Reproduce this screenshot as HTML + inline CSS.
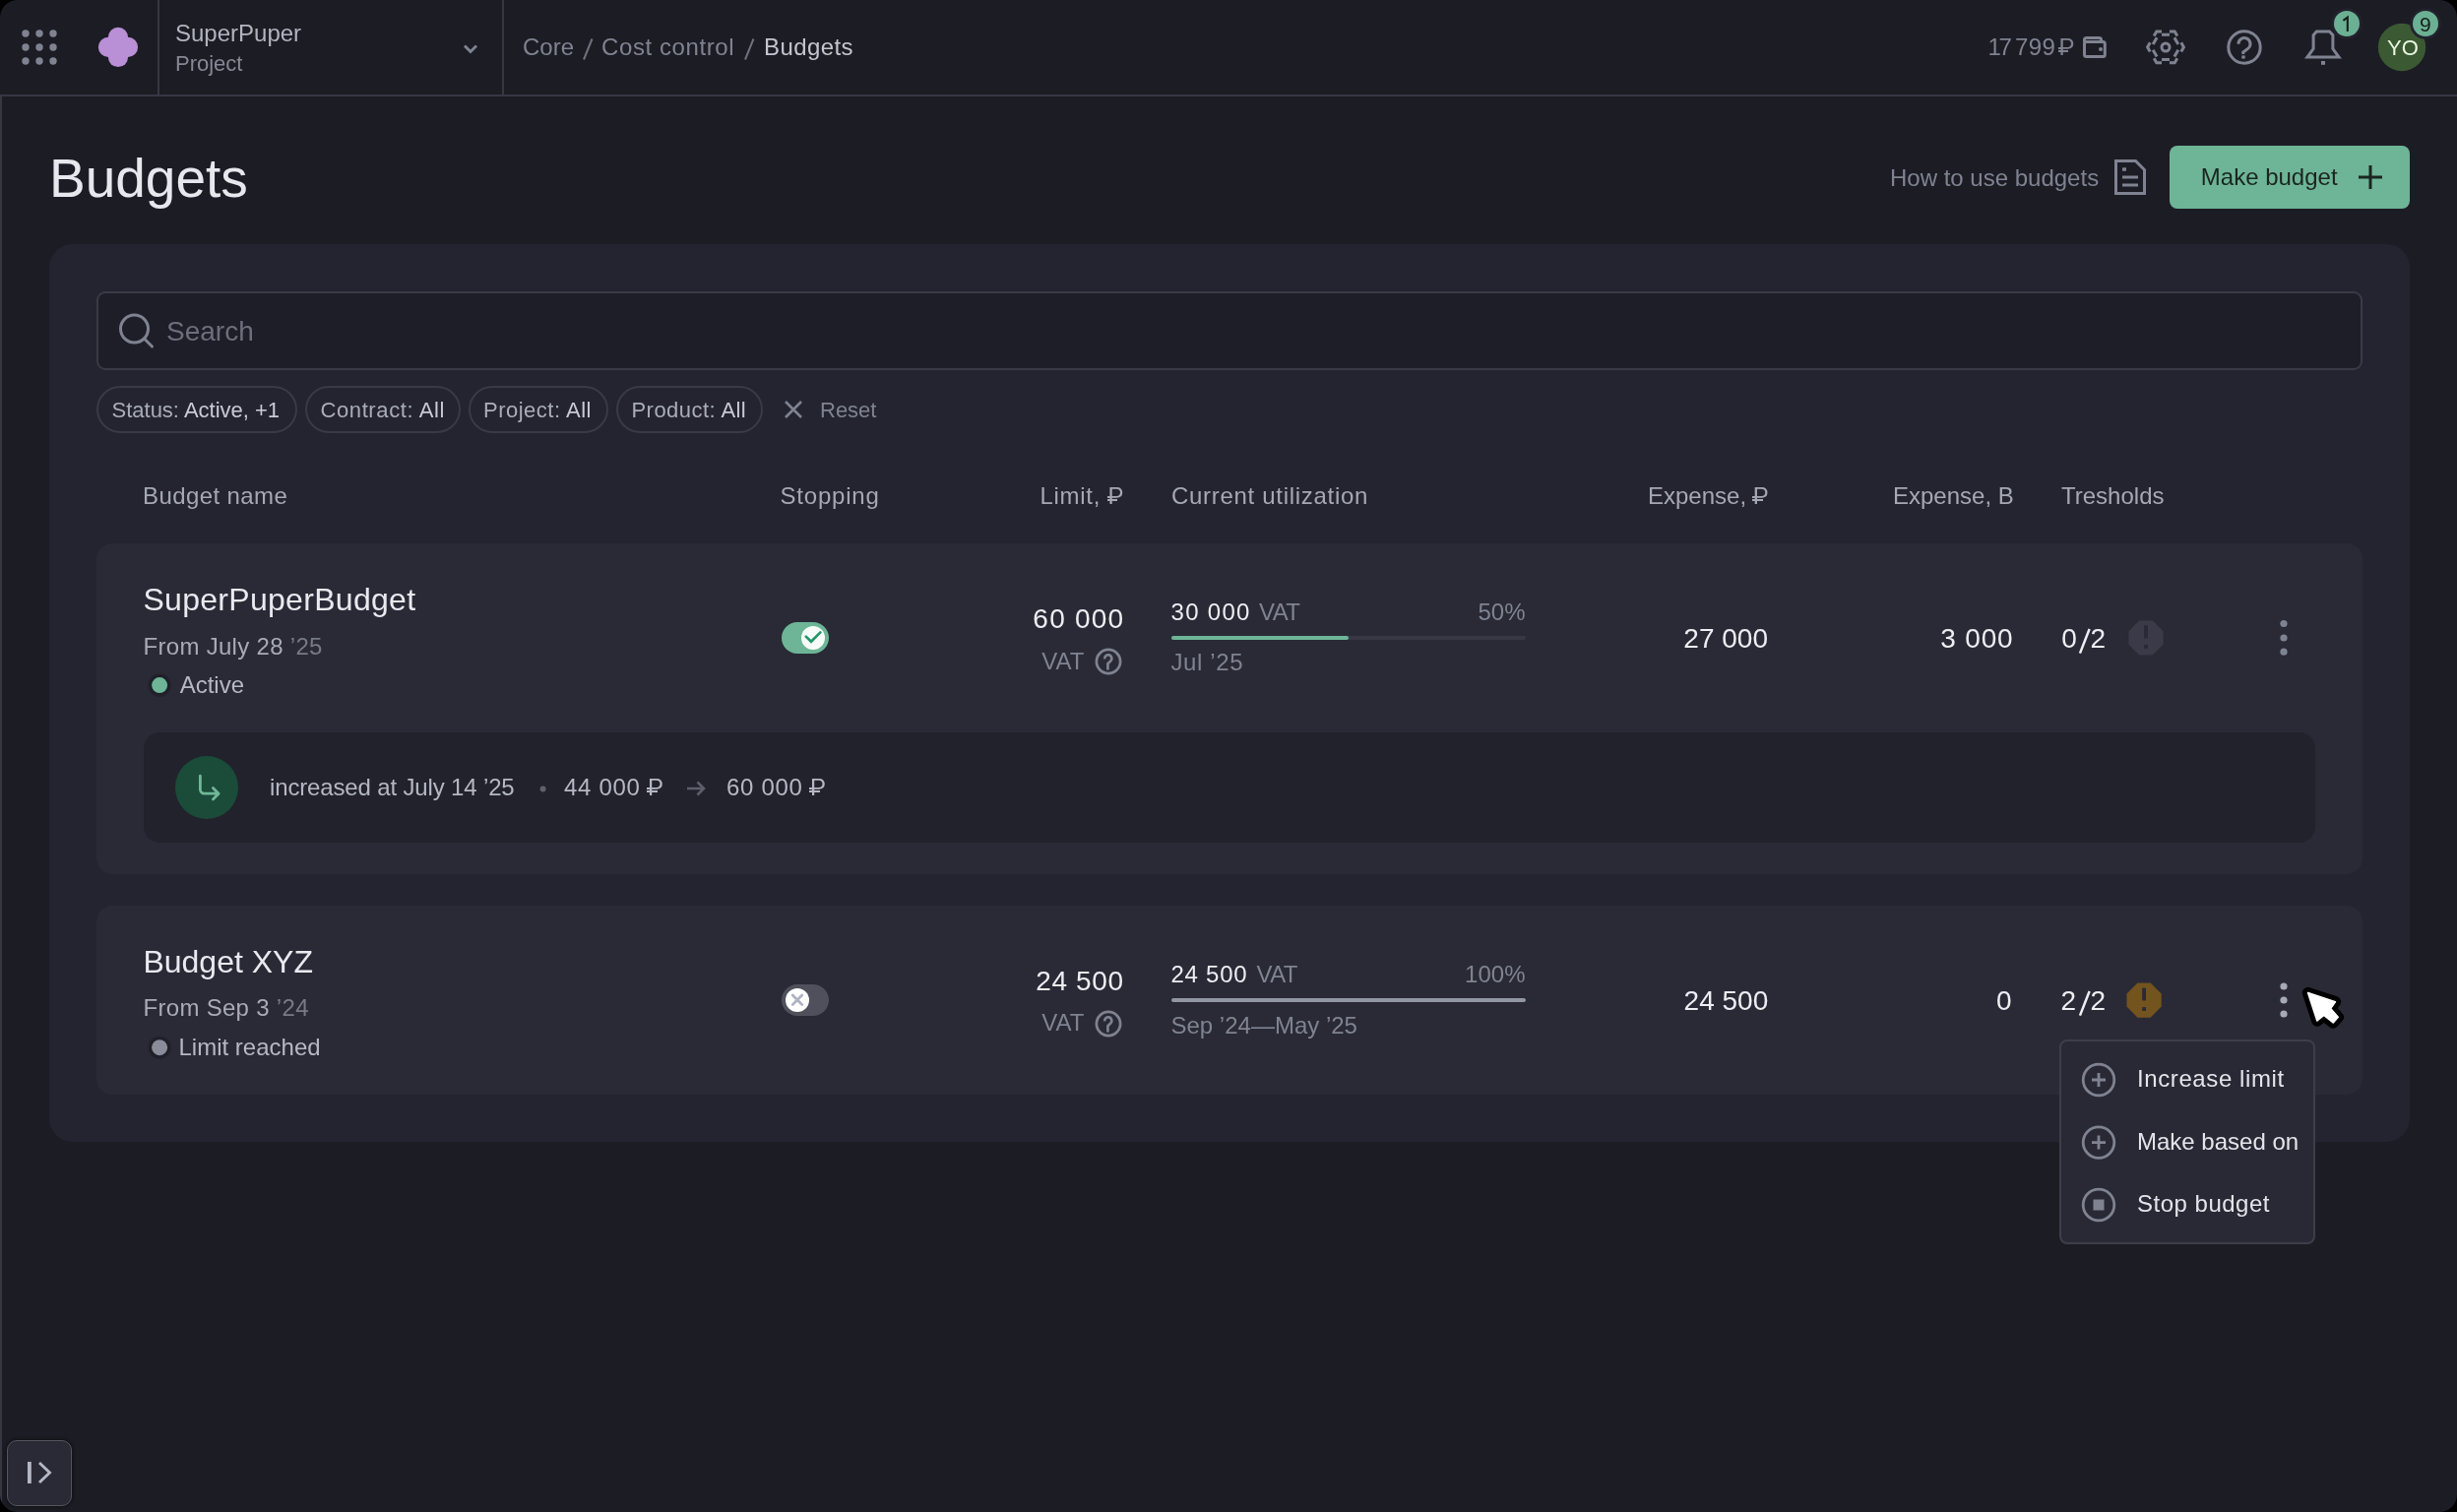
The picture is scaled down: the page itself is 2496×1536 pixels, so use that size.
<!DOCTYPE html>
<html><head><meta charset="utf-8">
<style>
html,body{margin:0;padding:0;background:#000;width:2496px;height:1536px;overflow:hidden}
*{box-sizing:border-box}
body{font-family:"Liberation Sans",sans-serif}
.win{will-change:transform;position:absolute;left:0;top:0;width:2496px;height:1536px;background:#1c1c24;border-radius:18px;overflow:hidden}
.a{position:absolute}
.t{position:absolute;line-height:1;white-space:nowrap}
.rub{position:relative;display:inline-block}
.rub::after{content:"";position:absolute;left:-0.025em;width:0.44em;height:0.08em;background:currentColor;top:0.625em}
.rub::before{content:"";position:absolute;left:-0.025em;width:0.19em;height:0.08em;background:currentColor;top:0.495em}
svg.full{position:absolute;left:0;top:0;width:2496px;height:1536px;overflow:visible}
</style></head><body>
<div class="win">
  <!-- ===== header ===== -->
  <div class="a" style="left:0;top:96px;width:2496px;height:2px;background:#363743"></div>
  <div class="a" style="left:160px;top:0;width:2px;height:96px;background:#363743"></div>
  <div class="a" style="left:510px;top:0;width:2px;height:96px;background:#363743"></div>
  <div class="a" style="left:0;top:96px;width:2px;height:1440px;background:#363743"></div>

  <div class="t" style="left:178px;top:21.7px;font-size:24px;color:#b1b4bf">SuperPuper</div>
  <div class="t" style="left:178px;top:53.7px;font-size:22px;color:#858894">Project</div>

  <div class="t" style="left:531px;top:35.7px;font-size:24px;color:#7f8391">Core</div>
  <div class="t" style="left:611px;top:35.7px;font-size:24px;color:#7f8391;letter-spacing:0.6px">Cost control</div>
  <div class="t" style="left:776px;top:35.7px;font-size:24px;color:#c3c6d0;letter-spacing:0.4px">Budgets</div>

  <div class="t" style="left:2019.6px;top:35.9px;font-size:24px;color:#7f8391;letter-spacing:-2.4px">17</div>
  <div class="t" style="left:2047px;top:35.9px;font-size:24px;color:#7f8391;letter-spacing:0.4px">799</div>
  <div class="t" style="left:2091.5px;top:35.9px;font-size:24px;color:#7f8391"><span class="rub">P</span></div>


  <!-- ===== title row ===== -->
  <div class="t" style="left:50px;top:153.6px;font-size:55px;color:#e6e8ee">Budgets</div>
  <div class="t" style="left:1920px;top:168.8px;font-size:24px;color:#7f8391">How to use budgets</div>
  <div class="a" style="left:2204px;top:148px;width:244px;height:64px;border-radius:8px;background:#6db596"></div>
  <div class="t" style="left:2235.8px;top:167.9px;font-size:24px;color:#1b2520">Make budget</div>

  <!-- ===== panel ===== -->
  <div class="a" style="left:50px;top:248px;width:2398px;height:912px;border-radius:24px;background:#242430"></div>
  <div class="a" style="left:98px;top:296px;width:2302px;height:80px;border-radius:9px;background:#1e1e28;border:2px solid #3a3a47"></div>
  <div class="t" style="left:169px;top:323px;font-size:28px;color:#6c6e7a">Search</div>

  <div class="a" style="left:98px;top:392px;width:204px;height:48px;border-radius:24px;border:2px solid #393a46"></div>
  <div class="a" style="left:310px;top:392px;width:158px;height:48px;border-radius:24px;border:2px solid #393a46"></div>
  <div class="a" style="left:476px;top:392px;width:142px;height:48px;border-radius:24px;border:2px solid #393a46"></div>
  <div class="a" style="left:626px;top:392px;width:148.5px;height:48px;border-radius:24px;border:2px solid #393a46"></div>
  <div class="t" style="left:113.5px;top:405.8px;font-size:22px;color:#a9adb8">Status: <span style="color:#c8cbd7">Active, +1</span></div>
  <div class="t" style="left:325.5px;top:405.8px;font-size:22px;color:#a9adb8;letter-spacing:0.6px">Contract: <span style="color:#c8cbd7">All</span></div>
  <div class="t" style="left:491px;top:405.8px;font-size:22px;color:#a9adb8;letter-spacing:0.5px">Project: <span style="color:#c8cbd7">All</span></div>
  <div class="t" style="left:641.5px;top:405.8px;font-size:22px;color:#a9adb8;letter-spacing:0.45px">Product: <span style="color:#c8cbd7">All</span></div>
  <div class="t" style="left:833px;top:405.8px;font-size:22px;color:#7f8391">Reset</div>

  <!-- table header -->
  <div class="t" style="left:145px;top:492px;font-size:24px;color:#a5a8b4;letter-spacing:0.4px">Budget name</div>
  <div class="t" style="left:792.5px;top:492px;font-size:24px;color:#a5a8b4;letter-spacing:0.8px">Stopping</div>
  <div class="t" style="left:1056.5px;top:492px;font-size:24px;color:#a5a8b4;letter-spacing:0.7px">Limit, <span class="rub">P</span></div>
  <div class="t" style="left:1190px;top:492px;font-size:24px;color:#a5a8b4;letter-spacing:0.7px">Current utilization</div>
  <div class="t" style="left:1674px;top:492px;font-size:24px;color:#a5a8b4">Expense, <span class="rub">P</span></div>
  <div class="t" style="left:1923px;top:492px;font-size:24px;color:#a5a8b4">Expense, B</div>
  <div class="t" style="left:2094px;top:492px;font-size:24px;color:#a5a8b4">Tresholds</div>

  <!-- ===== row 1 ===== -->
  <div class="a" style="left:98px;top:551.5px;width:2302px;height:336.5px;border-radius:16px;background:#2a2a36"></div>
  <div class="t" style="left:145.4px;top:593.4px;font-size:32px;color:#e9eaf0;letter-spacing:0.3px">SuperPuperBudget</div>
  <div class="t" style="left:145.5px;top:644.5px;font-size:24px;color:#a8abb7;letter-spacing:0.3px">From July 28 <span style="color:#777a86">’25</span></div>
  <div class="t" style="left:182.7px;top:684.3px;font-size:24px;color:#b5b8c2">Active</div>
  <div class="t" style="right:1353.8px;top:615.2px;font-size:28px;color:#eceef3;letter-spacing:1.2px">60 000</div>
  <div class="t" style="left:1058.3px;top:659.7px;font-size:24px;color:#7f8391">VAT</div>
  <div class="t" style="left:1189.5px;top:609.7px;font-size:24px;color:#eceef3;letter-spacing:1.3px">30 000</div>
  <div class="t" style="left:1279px;top:609.7px;font-size:24px;color:#7f8391;letter-spacing:-0.6px">VAT</div>
  <div class="t" style="right:946.5px;top:609.7px;font-size:24px;color:#7f8391">50%</div>
  <div class="t" style="left:1189.5px;top:661px;font-size:24px;color:#7f8391;letter-spacing:0.6px">Jul ’25</div>
  <div class="t" style="right:700px;top:634.8px;font-size:28px;color:#eceef3">27 000</div>
  <div class="t" style="right:450.6px;top:634.8px;font-size:28px;color:#eceef3;letter-spacing:0.8px">3 000</div>
  <div class="t" style="left:2094.2px;top:634.9px;font-size:28px;color:#eceef3">0</div>
  <div class="t" style="left:2123.6px;top:634.9px;font-size:28px;color:#eceef3">2</div>

  <div class="a" style="left:146px;top:744px;width:2206px;height:112px;border-radius:16px;background:#22222c"></div>
  <div class="t" style="left:274px;top:788.1px;font-size:24px;color:#b5b8c2;letter-spacing:-0.15px">increased at July 14 ’25</div>
  <div class="t" style="left:573px;top:788.1px;font-size:24px;color:#b5b8c2;letter-spacing:0.7px">44 000 <span class="rub">P</span></div>
  <div class="t" style="left:738px;top:788.1px;font-size:24px;color:#b5b8c2;letter-spacing:0.7px">60 000 <span class="rub">P</span></div>

  <!-- ===== row 2 ===== -->
  <div class="a" style="left:98px;top:920px;width:2302px;height:192px;border-radius:16px;background:#2a2a36"></div>
  <div class="t" style="left:145.4px;top:960.9px;font-size:32px;color:#e9eaf0">Budget XYZ</div>
  <div class="t" style="left:145.5px;top:1012.2px;font-size:24px;color:#a8abb7;letter-spacing:0.3px">From Sep 3 <span style="color:#777a86">’24</span></div>
  <div class="t" style="left:181.5px;top:1051.7px;font-size:24px;color:#b5b8c2">Limit reached</div>
  <div class="t" style="right:1354.4px;top:983.4px;font-size:28px;color:#eceef3;letter-spacing:0.6px">24 500</div>
  <div class="t" style="left:1058.3px;top:1027.1px;font-size:24px;color:#7f8391">VAT</div>
  <div class="t" style="left:1189.5px;top:977.5px;font-size:24px;color:#eceef3;letter-spacing:0.75px">24 500</div>
  <div class="t" style="left:1276.5px;top:977.5px;font-size:24px;color:#7f8391;letter-spacing:-0.6px">VAT</div>
  <div class="t" style="right:946.5px;top:977.5px;font-size:24px;color:#7f8391">100%</div>
  <div class="t" style="left:1189.5px;top:1030.1px;font-size:24px;color:#7f8391">Sep ’24—May ’25</div>
  <div class="t" style="right:699.8px;top:1002.8px;font-size:28px;color:#eceef3">24 500</div>
  <div class="t" style="right:452.4px;top:1002.8px;font-size:28px;color:#eceef3">0</div>
  <div class="t" style="left:2093.6px;top:1003px;font-size:28px;color:#eceef3">2</div>
  <div class="t" style="left:2123.6px;top:1003px;font-size:28px;color:#eceef3">2</div>

  <!-- ===== menu ===== -->
  <div class="a" style="left:2092px;top:1056px;width:260px;height:208px;border-radius:8px;background:#292935;border:2px solid #3d3e4a"></div>
  <div class="t" style="left:2171px;top:1084.3px;font-size:24px;color:#e3e5ea;letter-spacing:0.6px">Increase limit</div>
  <div class="t" style="left:2171px;top:1147.7px;font-size:24px;color:#e3e5ea">Make based on</div>
  <div class="t" style="left:2171px;top:1211.3px;font-size:24px;color:#e3e5ea;letter-spacing:0.5px">Stop budget</div>

  <!-- bottom-left button -->
  <div class="a" style="left:7px;top:1462.5px;width:66px;height:67px;border-radius:10px;background:#2a2a36;border:1.6px solid #55555e;box-shadow:0 0 3px 1px rgba(10,10,14,0.6)"></div>

  <svg class="full" viewBox="0 0 2496 1536">
    <!-- doc icon -->
    <g fill="none" stroke="#7f8391" stroke-width="3">
      <path d="M2149.5 163.5H2169.5L2178.5 172.5V196.5H2149.5Z"/>
      <path d="M2156 180H2172M2156 188H2172"/>
    </g>
    <rect x="2156" y="170.3" width="4" height="3.4" fill="#7f8391"/>
    <!-- plus in button -->
    <path d="M2408 168V192M2396 180H2420" stroke="#1b2520" stroke-width="3"/>
    <!-- search icon -->
    <g fill="none" stroke="#7f8391" stroke-width="3">
      <circle cx="136.5" cy="334" r="14"/>
      <path d="M146.5 344L154.5 352" stroke-linecap="round"/>
    </g>
    <!-- reset x -->
    <path d="M798 408L814 424M814 408L798 424" stroke="#7f8391" stroke-width="2.6"/>

    <!-- row1 icons -->
    <circle cx="162.1" cy="696.1" r="11.8" fill="#23232d"/><circle cx="162.1" cy="696.1" r="10.3" fill="#1f1f29"/>
    <circle cx="162.1" cy="696.1" r="8" fill="#6db596"/>
    <rect x="794" y="632" width="48" height="32" rx="16" fill="#6db596"/>
    <circle cx="826" cy="648" r="12" fill="#f8fcf9"/>
    <path d="M818.8 646.6L824 651.8L833.4 642.4" fill="none" stroke="#24966a" stroke-width="2.7" stroke-linecap="round"/>
    <g fill="none" stroke="#7f8391" stroke-width="2.7">
      <circle cx="1126" cy="672" r="12.1"/>
      <path d="M1122.2 669.4A3.6 3.6 0 1 1 1128.5 671.2L1125.4 674.3V680.6"/>
    </g>
    <rect x="1190" y="646" width="360" height="4" rx="2" fill="#383845"/>
    <rect x="1190" y="646" width="180" height="4" rx="2" fill="#6db596"/>
    <polygon points="2173.3,630.4 2186.7,630.4 2197.6,641.2 2197.6,654.8 2186.7,665.6 2173.3,665.6 2162.4,654.8 2162.4,641.2" fill="#3a3a48"/>
    <rect x="2178.1" y="635.3" width="3.8" height="13.1" fill="#2a2a36"/>
    <rect x="2178.1" y="654.9" width="3.8" height="4" fill="#2a2a36"/>
    <g fill="#7f8391"><circle cx="2320" cy="633.5" r="3.6"/><circle cx="2320" cy="648" r="3.6"/><circle cx="2320" cy="662.2" r="3.6"/></g>

    <path d="M2122.6 639L2113 663.6M2122.6 1007L2113 1031.6" stroke="#eceef3" stroke-width="2.5"/>
    <!-- history -->
    <circle cx="210" cy="800" r="32" fill="#1b4b39"/>
    <path d="M203.4 788.2V802a4.2 4.2 0 0 0 4.2 4.2H222M216.4 800.6L222.1 806.3L216.4 812" fill="none" stroke="#70b898" stroke-width="2.8" stroke-linecap="round" stroke-linejoin="round"/>
    <circle cx="551.6" cy="801.5" r="3" fill="#5e606c"/>
    <path d="M698 801H715M708.5 794.5L715 801L708.5 807.5" fill="none" stroke="#5c5e6a" stroke-width="2.6"/>

    <!-- row2 icons -->
    <circle cx="162.1" cy="1064.2" r="11.8" fill="#23232d"/><circle cx="162.1" cy="1064.2" r="10.3" fill="#1f1f29"/>
    <circle cx="162.1" cy="1064.2" r="8" fill="#8a8d99"/>
    <rect x="794" y="1000" width="48" height="32" rx="16" fill="#50505c"/>
    <circle cx="810" cy="1016" r="12" fill="#ffffff"/>
    <path d="M805.2 1011L814.8 1020.6M814.8 1011L805.2 1020.6" stroke="#adb1c2" stroke-width="2.7" stroke-linecap="round"/>
    <g fill="none" stroke="#7f8391" stroke-width="2.7">
      <circle cx="1126" cy="1040" r="12.1"/>
      <path d="M1122.2 1037.4A3.6 3.6 0 1 1 1128.5 1039.2L1125.4 1042.3V1048.6"/>
    </g>
    <rect x="1190" y="1014" width="360" height="4" rx="2" fill="#9396a3"/>
    <polygon points="2171.5,998.4 2184.6,998.4 2195.7,1009.5 2195.7,1022.6 2184.6,1033.7 2171.5,1033.7 2160.5,1022.6 2160.5,1009.5" fill="#73531e"/>
    <rect x="2176.2" y="1003.6" width="3.8" height="12.8" fill="#2a2a36"/>
    <rect x="2176.2" y="1023.1" width="3.8" height="3.8" fill="#2a2a36"/>
    <g fill="#a7aab5"><circle cx="2320" cy="1002" r="3.6"/><circle cx="2320" cy="1016" r="3.6"/><circle cx="2320" cy="1030" r="3.6"/></g>

    <!-- menu icons -->
    <g fill="none" stroke="#7f8391" stroke-width="2.8">
      <circle cx="2132" cy="1097" r="15.8"/><path d="M2132 1090V1104M2125 1097H2139"/>
      <circle cx="2132" cy="1160.6" r="15.8"/><path d="M2132 1153.6V1167.6M2125 1160.6H2139"/>
      <circle cx="2132" cy="1224" r="15.8"/>
    </g>
    <rect x="2126.5" y="1218.5" width="11" height="11" fill="#7f8391"/>

    <!-- cursor -->
    <path d="M2344.6 1008.6L2372.4 1017.8L2367.6 1024.6L2375.2 1033.2L2370.2 1038.9L2360.8 1031.4L2353.9 1037Z" fill="#000" stroke="#000" stroke-width="11.5" stroke-linejoin="round"/>
    <path d="M2344.6 1008.6L2372.4 1017.8L2367.6 1024.6L2375.2 1033.2L2370.2 1038.9L2360.8 1031.4L2353.9 1037Z" fill="#fff" stroke="#fff" stroke-width="1.6" stroke-linejoin="round"/>

    <!-- bottom-left icon -->
    <rect x="28" y="1485" width="3.8" height="22" fill="#b4b7c6"/>
    <path d="M40 1486L50.5 1496L40 1506" fill="none" stroke="#b4b7c6" stroke-width="2.9"/>
  </svg>

  <svg class="full" viewBox="0 0 2496 1536">
    <!-- dots grid -->
    <g fill="#7f8391">
      <circle cx="26" cy="34" r="3.7"/><circle cx="40" cy="34" r="3.7"/><circle cx="54" cy="34" r="3.7"/>
      <circle cx="26" cy="48" r="3.7"/><circle cx="40" cy="48" r="3.7"/><circle cx="54" cy="48" r="3.7"/>
      <circle cx="26" cy="62" r="3.7"/><circle cx="40" cy="62" r="3.7"/><circle cx="54" cy="62" r="3.7"/>
    </g>
    <!-- flower logo -->
    <g fill="#b98fd5">
      <circle cx="120" cy="37.8" r="10.1"/><circle cx="120" cy="58" r="10.1"/>
      <circle cx="110" cy="47.9" r="10.1"/><circle cx="130" cy="47.9" r="10.1"/>
      <rect x="110" y="38" width="20" height="20"/>
    </g>
    <path d="M601.5 39.5L593 60.5M765.5 39.5L757 60.5" stroke="#6e717d" stroke-width="2"/>
    <!-- chevron -->
    <path d="M472 46.5L478 52.5L484 46.5" fill="none" stroke="#7f8391" stroke-width="3"/>
    <!-- wallet -->
    <g fill="none" stroke="#7f8391" stroke-width="3">
      <rect x="2117.5" y="42.5" width="20.8" height="15" rx="2"/>
      <path d="M2117.5 43V40.5a2 2 0 0 1 2-2H2132.5a2 2 0 0 1 2 2V42.5"/>
    </g>
    <circle cx="2134" cy="50" r="2" fill="#7f8391"/>
    <!-- gear -->
    <g fill="none" stroke="#7f8391" stroke-width="3">
      <path d="M2184.22 52.44L2181.60 47.90L2184.22 43.36M2188.18 36.51L2190.80 31.97L2196.04 31.97M2203.96 31.97L2209.20 31.97L2211.82 36.51M2215.78 43.36L2218.40 47.90L2215.78 52.44M2211.82 59.29L2209.20 63.83L2203.96 63.83M2196.04 63.83L2190.80 63.83L2188.18 59.29M2187.17 45.06L2191.12 38.21M2196.04 35.37L2203.96 35.37M2208.88 38.21L2212.83 45.06M2212.83 50.74L2208.88 57.59M2203.96 60.43L2196.04 60.43M2191.12 57.59L2187.17 50.74"/>
      <circle cx="2200" cy="48" r="4"/>
    </g>
    <!-- help -->
    <g fill="none" stroke="#7f8391" stroke-width="3">
      <circle cx="2280" cy="48" r="16.2"/>
      <path d="M2274 44.8a6 6 0 1 1 9.6 4.6l-4.8 3.6v2"/>
    </g>
    <rect x="2277.3" y="56.4" width="3.4" height="3.2" fill="#7f8391"/>
    <!-- bell -->
    <path d="M2343.9 58H2376L2369.9 49.6V35.7L2366.5 32H2353.3L2350.1 35.7V49.6Z" fill="none" stroke="#7f8391" stroke-width="3" stroke-linejoin="miter"/>
    <rect x="2358" y="62" width="4" height="3.8" fill="#7f8391"/>
    <!-- badge 1 -->
    <circle cx="2384" cy="24" r="15.8" fill="#22222d"/>
    <circle cx="2384" cy="24" r="13" fill="#6cb093"/>
    <!-- avatar -->
    <circle cx="2440" cy="48" r="24.2" fill="#3b5932"/>
    <circle cx="2464" cy="24" r="15.8" fill="#22222d"/>
    <circle cx="2464" cy="24" r="13" fill="#6cb093"/>
  </svg>
  <div class="t" style="left:2425px;top:38.4px;font-size:22px;color:#e8f7e0">YO</div>
  <svg class="full" viewBox="0 0 2496 1536"><path d="M2380.4 20.8L2384.8 17.6V32" fill="none" stroke="#13201a" stroke-width="2.1"/></svg>
  <div class="t" style="left:2458px;top:14.2px;font-size:21px;color:#13201a">9</div>
</div>
</body></html>
